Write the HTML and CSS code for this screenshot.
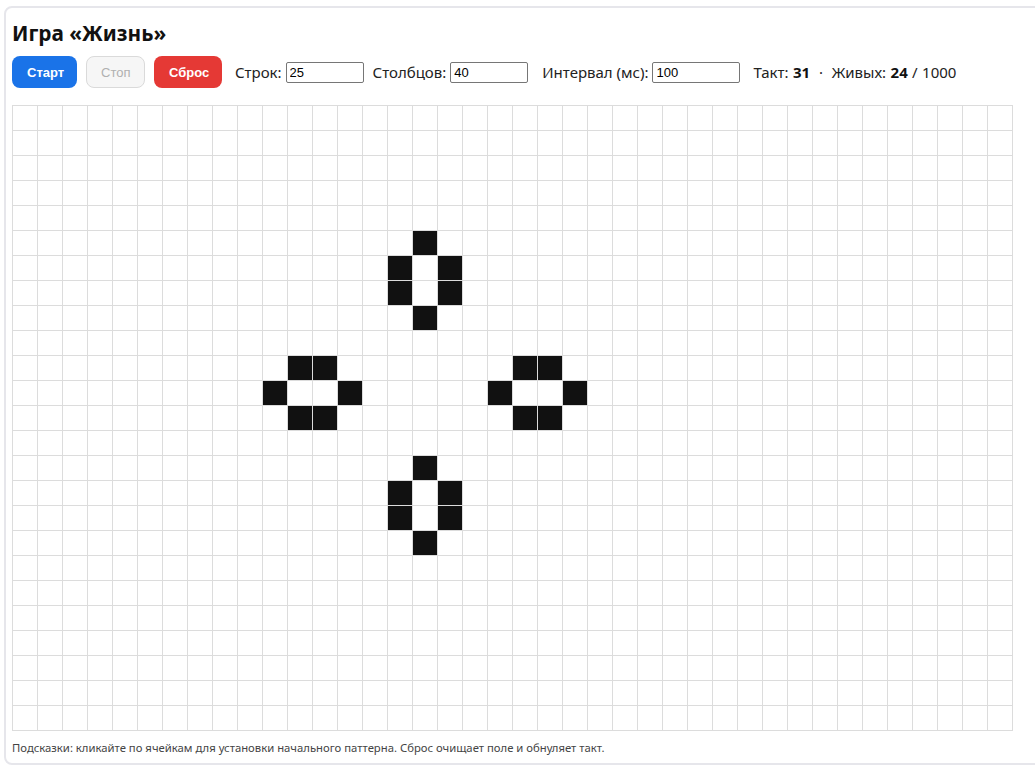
FILE: index.html
```html
<!DOCTYPE html>
<html lang="ru">
<head>
<meta charset="utf-8">
<title>Игра «Жизнь»</title>
<link rel="stylesheet" href="styles.css">
</head>
<body>
<div class="card">
  <h1 class="title">Игра «Жизнь»</h1>
  <div class="controls">
    <button class="btn btn-start">Старт</button>
    <button class="btn btn-stop" disabled>Стоп</button>
    <button class="btn btn-reset">Сброс</button>
    <label class="field">Строк: <input class="num" type="text" value="25"></label>
    <label class="field field-cols">Столбцов: <input class="num" type="text" value="40"></label>
    <label class="field">Интервал (мс): <input class="num num-wide" type="text" value="100"></label>
    <span class="stats">Такт: <b>31</b> &nbsp;·&nbsp; Живых: <b>24</b> / 1000</span>
  </div>
  <div class="grid" id="grid"></div>
  <p class="hint">Подсказки: кликайте по ячейкам для установки начального паттерна. Сброс очищает поле и обнуляет такт.</p>
</div>
<script>
(function(){
  var alive = {
    "5,16":1,"6,15":1,"6,17":1,"7,15":1,"7,17":1,"8,16":1,
    "14,16":1,"15,15":1,"15,17":1,"16,15":1,"16,17":1,"17,16":1,
    "10,11":1,"10,12":1,"11,10":1,"11,13":1,"12,11":1,"12,12":1,
    "10,20":1,"10,21":1,"11,19":1,"11,22":1,"12,20":1,"12,21":1
  };
  var g = document.getElementById('grid');
  var html = '';
  for (var r = 0; r < 25; r++) {
    for (var c = 0; c < 40; c++) {
      html += '<div class="cell' + (alive[r + ',' + c] ? ' alive' : '') + '"></div>';
    }
  }
  g.innerHTML = html;
})();
</script>
</body>
</html>
```

FILE: styles.css
```css
html, body {
  margin: 0;
  padding: 0;
  overflow: hidden;
  background: #fff;
}
body {
  font-family: "Noto Sans", "Open Sans", sans-serif;
  color: #1a1a1a;
}
.card {
  margin: 6px 0 0 4px;
  width: 1060px;
  height: 759px;
  box-sizing: border-box;
  border: 2px solid #e6e6eb;
  border-radius: 8px;
  padding: 10px 6px 0 6px;
}
.title {
  margin: 0;
  font-size: 20.8px;
  font-weight: 700;
  line-height: 30px;
  color: #111;
}
.controls {
  display: flex;
  align-items: center;
  gap: 9px;
  margin-top: 8px;
  height: 32px;
}
.btn {
  font-family: "Liberation Sans", Arial, sans-serif;
  font-size: 13px;
  font-weight: 700;
  height: 32px;
  padding: 0 14px;
  border-radius: 8px;
  border: 1px solid transparent;
  color: #fff;
}
.btn-start { background: #1a73e8; width: 65px; }
.btn-stop { background: #f6f6f6; border-color: #dadada; color: #b0b0b0; font-weight: 400; width: 59px; }
.btn-reset { background: #e53935; width: 68px; margin-right: 4px; }
.field {
  font-size: 15px;
  color: #222;
  display: flex;
  align-items: center;
  gap: 4px;
}
.field-cols { margin-right: 5px; }
.num {
  width: 78px;
  height: 21px;
  box-sizing: border-box;
  border: 1px solid #767676;
  border-radius: 2px;
  padding: 1px 3px;
  font-family: "Liberation Sans", Arial, sans-serif;
  font-size: 13px;
  color: #000;
}
.num-wide { width: 88px; }
.stats {
  font-size: 15px;
  color: #222;
  margin-left: 4px;
  word-spacing: 0.5px;
}
.stats b { font-weight: 700; color: #111; }
.grid {
  margin-top: 17px;
  display: grid;
  grid-template-columns: repeat(40, 24px);
  grid-auto-rows: 24px;
  gap: 1px;
  padding: 1px;
  background: #dcdcdc;
  width: max-content;
}
.cell { background: #fff; }
.cell.alive { background: #111; }
.hint {
  margin: 9px 0 0 0;
  font-size: 11.3px;
  color: #444;
}
```
